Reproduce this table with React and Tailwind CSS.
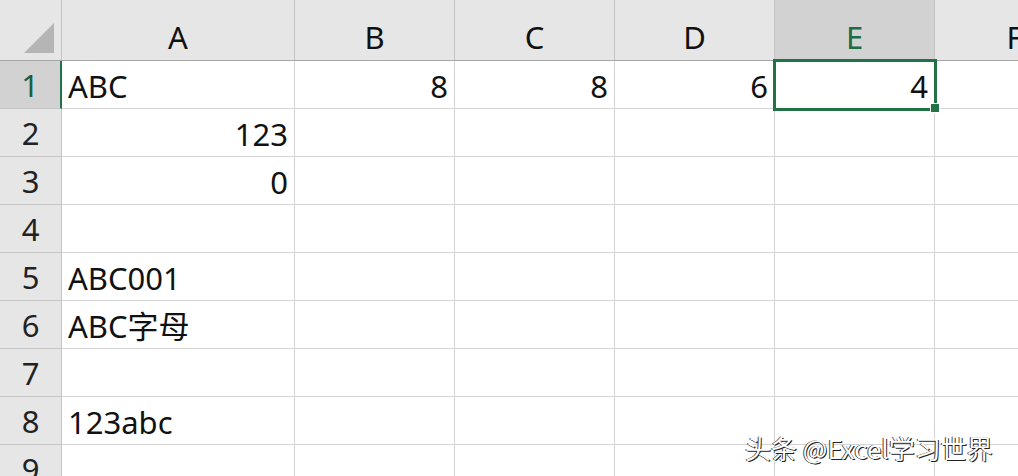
import React from 'react'

const cols = [
  { key: 'A', w: 'w-[233px]' },
  { key: 'B', w: 'w-[160px]' },
  { key: 'C', w: 'w-[160px]' },
  { key: 'D', w: 'w-[160px]' },
  { key: 'E', w: 'w-[160px]' },
  { key: 'F', w: 'w-[160px]' },
]

// cell values: [text, align]
const data = {
  1: { A: ['ABC', 'l'], B: ['8', 'r'], C: ['8', 'r'], D: ['6', 'r'], E: ['4', 'r'] },
  2: { A: ['123', 'r'] },
  3: { A: ['0', 'r'] },
  4: {},
  5: { A: ['ABC001', 'l'] },
  6: { A: ['ABC字母', 'l'] },
  7: {},
  8: { A: ['123abc', 'l'] },
  9: {},
}

const font = "font-['Noto_Sans','Noto_Sans_CJK_SC',sans-serif]"

export default function App() {
  return (
    <div className={`relative w-[1018px] h-[476px] overflow-hidden bg-white text-[#111] ${font}`}>
      {/* column headers */}
      <div className="flex h-[61px] bg-[#e6e6e6] border-b border-[#a6a6a6]">
        <div className="w-[62px] shrink-0 border-r border-[#c4c4c4] flex items-end justify-end pr-[7px] pb-[7px]">
          <svg width="30" height="30" viewBox="0 0 30 30">
            <polygon points="30,0 30,30 0,30" fill="#b5b5b5" />
          </svg>
        </div>
        {cols.map(c => (
          <div
            key={c.key}
            className={`${c.w} shrink-0 flex items-end justify-center pb-[2px] text-[31px] leading-[42px] border-r border-[#c4c4c4] ${
              c.key === 'E' ? 'bg-[#d2d2d2] text-[#1e6b45]' : ''
            }`}
          >
            {c.key}
          </div>
        ))}
      </div>

      {/* rows */}
      {Object.keys(data).map(r => {
        const row = data[r]
        const sel = r === '1'
        return (
          <div key={r} className="flex h-[48px]">
            <div
              className={`w-[62px] shrink-0 flex items-center justify-center text-[31px] pt-[2px] border-b ${
                sel
                  ? 'bg-[#d2d2d2] text-[#1e5e43] border-r-2 border-r-[#217346] border-b-[#c4c4c4]'
                  : 'bg-[#e6e6e6] text-[#222] border-r border-[#c4c4c4]'
              }`}
            >
              {r}
            </div>
            {cols.map(c => {
              const v = row[c.key]
              return (
                <div
                  key={c.key}
                  className={`${c.w} shrink-0 flex items-center px-[6px] pt-[4px] text-[31px] whitespace-nowrap border-r border-b border-[#d4d4d4] ${
                    v && v[1] === 'r' ? 'justify-end' : 'justify-start'
                  }`}
                >
                  {v ? v[0] : ''}
                </div>
              )
            })}
          </div>
        )
      })}

      {/* active cell E1 */}
      <div className="absolute left-[773px] top-[59px] w-[164px] h-[52px] border-[3px] border-[#217346]" />
      <div className="absolute left-[930px] top-[103px] w-[10px] h-[10px] bg-[#217346] border border-white" />

      {/* watermark */}
      <div className="absolute left-[745px] top-[430px] text-[26px] leading-[36px] text-white font-['Noto_Sans_CJK_SC',sans-serif] [text-shadow:1px_1px_0_#222,-1px_0_0_#444]">
        头条 @Excel学习世界
      </div>
    </div>
  )
}
